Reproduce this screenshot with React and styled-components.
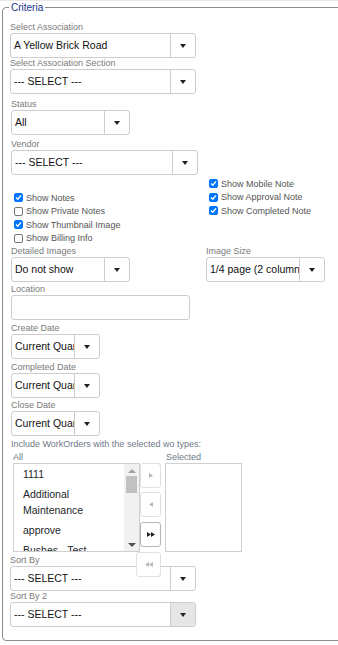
import React from "react";
import styled, { createGlobalStyle } from "styled-components";

const Global = createGlobalStyle`
  html, body {
    margin: 0;
    padding: 0;
    background: #fff;
    overflow: hidden;
  }
  body {
    font-family: "Liberation Sans", Arial, sans-serif;
  }
`;

const Page = styled.div`
  border-top: 1px solid #e8e8e8;
  padding: 1px 0 0 2px;
  width: 440px;
`;

const Fieldset = styled.fieldset`
  margin: 0;
  width: 420px;
  border: 1px solid #8c8c8c;
  border-radius: 4px;
  padding: 0 0 13px 7px;
  min-inline-size: 0;
`;

const Legend = styled.legend`
  font-size: 10px;
  line-height: 11px;
  color: #15318c;
  padding: 0 2px;
  margin-left: -1px;
`;

const Label = styled.div`
  font-size: 9px;
  line-height: 11px;
  height: 11px;
  color: ${p => (p.$blue ? "#6f7987" : "#7a7a7a")};
  margin-top: ${p => p.$top || 0}px;
  padding-left: ${p => p.$x || 0}px;
  white-space: nowrap;
`;

const SelectBox = styled.div`
  display: flex;
  box-sizing: border-box;
  width: ${p => p.$w}px;
  height: 25px;
  margin-left: ${p => p.$x || 0}px;
  border: 1px solid #cdcdcd;
  border-radius: 3px;
  background: #fff;
`;

const SelectValue = styled.div`
  flex: 1;
  min-width: 0;
  overflow: hidden;
  white-space: nowrap;
  font-size: 10.5px;
  line-height: 23px;
  color: #111;
  padding-left: 3px;
`;

const SelectArrow = styled.div`
  flex: none;
  width: 24px;
  border-left: 1px solid #cdcdcd;
  border-radius: 0 2px 2px 0;
  background: ${p => (p.$active ? "#e6e6e6" : "transparent")};
  display: flex;
  align-items: center;
  justify-content: center;
  &::after {
    content: "";
    border-left: 3px solid transparent;
    border-right: 3px solid transparent;
    border-top: 4px solid #222;
  }
`;

const TextInput = styled.div`
  box-sizing: border-box;
  width: 179px;
  height: 25px;
  margin-left: 1px;
  border: 1px solid #cdcdcd;
  border-radius: 3px;
`;

const TwoCol = styled.div`
  display: grid;
  grid-template-columns: 196px 1fr;
  margin-top: ${p => p.$top || 0}px;
`;

const CheckCol = styled.div`
  padding-top: ${p => p.$top || 0}px;
  padding-left: ${p => p.$x || 0}px;
`;

const CheckRow = styled.div`
  display: flex;
  align-items: center;
  height: 13.5px;
  font-size: 9px;
  color: #555;
  white-space: nowrap;
`;

const Box = styled.span`
  box-sizing: border-box;
  width: 9px;
  height: 9px;
  margin-right: 3px;
  border-radius: 2px;
  border: 1px solid ${p => (p.$on ? "#0075ff" : "#767676")};
  background: ${p => (p.$on ? "#0075ff" : "#fff")};
  display: flex;
  align-items: center;
  justify-content: center;
`;

function Check({ on, children }) {
  return (
    <CheckRow>
      <Box $on={on}>
        {on && (
          <svg width="7" height="7" viewBox="0 0 7 7">
            <path d="M1 3.6 L2.8 5.3 L6 1.4" fill="none" stroke="#fff" strokeWidth="1.4" />
          </svg>
        )}
      </Box>
      {children}
    </CheckRow>
  );
}

function Select({ w, x, value, active }) {
  return (
    <SelectBox $w={w} $x={x}>
      <SelectValue>{value}</SelectValue>
      <SelectArrow $active={active} />
    </SelectBox>
  );
}

const DualHead = styled.div`
  display: flex;
  padding-left: 3px;
  margin-top: 1px;
  height: 12px;
  font-size: 9px;
  line-height: 12px;
  color: #6f7987;
  span:first-child {
    width: 153px;
  }
`;

const DualRow = styled.div`
  display: flex;
  align-items: flex-start;
  height: 89px;
  margin-left: 3px;
`;

const ListBox = styled.div`
  box-sizing: border-box;
  width: 127px;
  height: 89px;
  border: 1px solid #cfcfcf;
  display: flex;
  overflow: hidden;
`;

const Items = styled.div`
  flex: 1;
  min-width: 0;
  padding-left: 9px;
  font-size: 10.5px;
  line-height: 16px;
  color: #221f2a;
`;

const Item = styled.div`
  padding: 2px 0;
`;

const Scrollbar = styled.div`
  flex: none;
  width: 15px;
  background: #f1f1f1;
  display: flex;
  flex-direction: column;
  align-items: center;
  justify-content: space-between;
  padding: 5px 0 4px;
  box-sizing: border-box;
`;

const Thumb = styled.div`
  width: 11px;
  height: 17px;
  background: #c1c1c1;
  margin-top: 3px;
  margin-bottom: auto;
`;

const Tri = styled.div`
  border-left: 4px solid transparent;
  border-right: 4px solid transparent;
  ${p =>
    p.$up
      ? `border-bottom: 4px solid #a3a3a3;`
      : `border-top: 4px solid #505050;`}
`;

const ButtonCol = styled.div`
  position: relative;
  z-index: 1;
  display: flex;
  flex-direction: column;
  align-items: flex-end;
  width: 21px;
`;

const MoveButton = styled.div`
  box-sizing: border-box;
  width: ${p => (p.$wide ? 25 : 21)}px;
  height: 25px;
  margin-top: ${p => p.$top || 0}px;
  border: 1px solid ${p => (p.$on ? "#b5b5b5" : "#e0e0e0")};
  border-radius: 3px;
  background: #fff;
  display: flex;
  align-items: center;
  justify-content: center;
`;

const SelectedBox = styled.div`
  box-sizing: border-box;
  width: 77px;
  height: 89px;
  margin-left: 4px;
  border: 1px solid #cfcfcf;
`;

function Arrows({ dir, n, color }) {
  const tris = [];
  for (let i = 0; i < n; i++) {
    const o = i * 4;
    tris.push(
      dir === "r" ? (
        <path key={i} d={`M${o} 0 L${o + 4} 2.5 L${o} 5 Z`} fill={color} />
      ) : (
        <path key={i} d={`M${o + 4} 0 L${o} 2.5 L${o + 4} 5 Z`} fill={color} />
      )
    );
  }
  return (
    <svg width={n * 4} height="5" viewBox={`0 0 ${n * 4} 5`}>
      {tris}
    </svg>
  );
}

export default function App() {
  return (
    <Page>
      <Global />
      <Fieldset>
        <Legend>Criteria</Legend>
        <Label $top={9}>Select Association</Label>
        <Select w={186} value="A Yellow Brick Road" />
        <Label>Select Association Section</Label>
        <Select w={186} value="--- SELECT ---" />
        <Label $top={5} $x={1}>Status</Label>
        <Select w={119} x={1} value="All" />
        <Label $top={4} $x={1}>Vendor</Label>
        <Select w={187} x={1} value="--- SELECT ---" />

        <TwoCol $top={2}>
          <CheckCol $top={14} $x={4}>
            <Check on>Show Notes</Check>
            <Check>Show Private Notes</Check>
            <Check on>Show Thumbnail Image</Check>
            <Check>Show Billing Info</Check>
          </CheckCol>
          <CheckCol $x={3}>
            <Check on>Show Mobile Note</Check>
            <Check on>Show Approval Note</Check>
            <Check on>Show Completed Note</Check>
          </CheckCol>
        </TwoCol>

        <TwoCol $top={1}>
          <div>
            <Label $x={1}>Detailed Images</Label>
            <Select w={119} x={1} value="Do not show" />
          </div>
          <div>
            <Label>Image Size</Label>
            <Select w={119} value="1/4 page (2 columns)" />
          </div>
        </TwoCol>

        <Label $top={2} $x={1}>Location</Label>
        <TextInput />
        <Label $top={3} $x={1}>Create Date</Label>
        <Select w={89} x={1} value="Current Quarter" />
        <Label $top={3} $x={1}>Completed Date</Label>
        <Select w={89} x={1} value="Current Quarter" />
        <Label $top={2} $x={1}>Close Date</Label>
        <Select w={89} x={1} value="Current Quarter" />

        <Label $top={3} $x={1} $blue>Include WorkOrders with the selected wo types:</Label>
        <DualHead>
          <span>All</span>
          <span>Selected</span>
        </DualHead>
        <DualRow>
          <ListBox>
            <Items>
              <Item>1111</Item>
              <Item>Additional Maintenance</Item>
              <Item>approve</Item>
              <Item>Bushes - Test</Item>
            </Items>
            <Scrollbar>
              <Tri $up />
              <Thumb />
              <Tri />
            </Scrollbar>
          </ListBox>
          <ButtonCol>
            <MoveButton>
              <Arrows dir="r" n={1} color="#b8b8b8" />
            </MoveButton>
            <MoveButton $top={4}>
              <Arrows dir="l" n={1} color="#b8b8b8" />
            </MoveButton>
            <MoveButton $top={5} $on>
              <Arrows dir="r" n={2} color="#222" />
            </MoveButton>
            <MoveButton $top={5} $wide>
              <Arrows dir="l" n={2} color="#b8b8b8" />
            </MoveButton>
          </ButtonCol>
          <SelectedBox />
        </DualRow>

        <Label $top={3}>Sort By</Label>
        <Select w={186} value="--- SELECT ---" />
        <Label>Sort By 2</Label>
        <Select w={186} value="--- SELECT ---" active />
      </Fieldset>
    </Page>
  );
}
